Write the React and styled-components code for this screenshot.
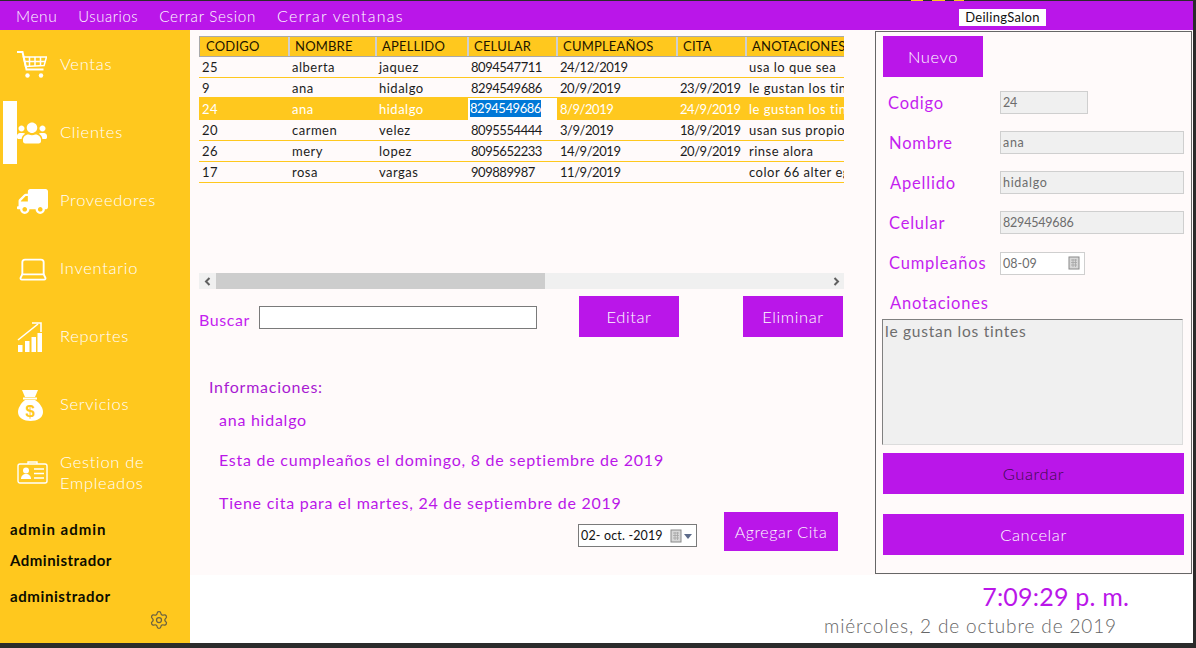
import React from 'react';
import styled, { createGlobalStyle } from 'styled-components';
import { FaUsers, FaTruck } from 'react-icons/fa';
import { Settings, Laptop } from 'lucide-react';

const purple = '#BA16E9';
const yellow = '#FFC81E';
const snow = '#FFFAFA';

const GlobalStyle = createGlobalStyle`
  html, body { margin: 0; padding: 0; background: #2b2b2b; }
  body { font-family: "Lato", "Open Sans", sans-serif; font-weight: 300; letter-spacing: 0.55px; overflow: hidden; }
  * { box-sizing: border-box; }
`;

const Screen = styled.div`
  width: 1196px;
  height: 648px;
  display: flex;
  flex-direction: column;
  background: #2b2b2b;
  overflow: hidden;
`;

const TopStrip = styled.div`
  height: 1px;
  flex: none;
  display: flex;
  padding-left: 911px;
  gap: 9px;
`;

const StripBit = styled.span`
  width: ${(p) => p.$w}px;
  background: ${yellow};
`;

const Window = styled.div`
  width: 1193px;
  height: 642px;
  flex: none;
  display: flex;
  flex-direction: column;
  background: #fff;
`;

const MenuBar = styled.div`
  height: 29px;
  flex: none;
  background: ${purple};
  display: flex;
  align-items: center;
  gap: 21px;
  padding: 0 147px 0 16px;
  color: #fff;
`;

const MenuLink = styled.span`
  font-size: ${(p) => p.$fs}px;
  letter-spacing: ${(p) => p.$ls}px;
  white-space: nowrap;
`;

const Brand = styled.div`
  margin-left: auto;
  margin-top: 3px;
  width: 87px;
  height: 17px;
  line-height: 17px;
  background: #fff;
  color: #111;
  font-size: 13px;
  font-weight: 400;
  text-align: center;
  letter-spacing: 0.3px;
`;

const Body = styled.div`
  flex: 1;
  display: flex;
  min-height: 0;
`;

const Sidebar = styled.aside`
  width: 190px;
  flex: none;
  background: ${yellow};
  padding-top: 1px;
  display: flex;
  flex-direction: column;
`;

const NavItem = styled.div`
  position: relative;
  height: 68px;
  flex: none;
  display: flex;
  align-items: center;
  padding-left: 17px;
  color: #fff;
  font-size: 16.5px;
  letter-spacing: 0.7px;
  line-height: 21px;
  ${(p) =>
    p.$active &&
    `&::before {
      content: '';
      position: absolute;
      left: 3px;
      top: 2px;
      width: 14px;
      height: 63px;
      background: #fff;
    }`}
`;

const NavIcon = styled.div`
  position: relative;
  width: 43px;
  flex: none;
  display: flex;
  color: #fff;
`;

const NavLabel = styled.span`
  padding-bottom: 1px;
`;

const UserBlock = styled.div`
  padding: 12px 0 0 10px;
  color: #0c0c00;
  font-weight: 700;
  font-size: 15px;
`;

const UserLine = styled.div`
  height: 20px;
  line-height: 20px;
  letter-spacing: ${(p) => p.$ls}px;
  margin-bottom: ${(p) => p.$gap}px;
`;

const GearRow = styled.div`
  display: flex;
  justify-content: flex-end;
  padding-right: 21px;
  margin-top: 4px;
  color: #6b6240;
`;

const Main = styled.main`
  flex: 1;
  display: flex;
  flex-direction: column;
  min-width: 0;
`;

const Content = styled.div`
  height: 545px;
  flex: none;
  display: flex;
  background: ${snow};
`;

const LeftPane = styled.section`
  width: 685px;
  flex: none;
  padding: 6px 0 0 9px;
`;

const TableArea = styled.div`
  width: 645px;
  height: 237px;
  overflow: hidden;
`;

const Row = styled.div`
  display: grid;
  grid-template-columns: 90px 87px 92px 89px 120px 69px 98px;
  width: 645px;
  height: ${(p) => p.$h}px;
  align-items: center;
  font-size: 13px;
  font-weight: 400;
  letter-spacing: 0.5px;
  color: ${(p) => (p.$selected ? '#fff' : '#1c1c1c')};
  background: ${(p) => (p.$selected ? yellow : 'transparent')};
  border-bottom: ${(p) => (p.$selected ? 'none' : `1px solid ${yellow}`)};
`;

const HeadRow = styled(Row)`
  background: ${yellow};
  border: none;
  border-top: 1px solid #a9a9a9;
  border-bottom: 1px solid #a9a9a9;
  border-left: 1px solid #a9a9a9;
  color: #1c1400;
  letter-spacing: 0.2px;
`;

const HeadCell = styled.div`
  height: 100%;
  line-height: 19px;
  padding-left: 5px;
  white-space: nowrap;
  overflow: hidden;
  border-right: 2px solid #cfcfcf;
  &:first-child { padding-left: 6px; }
  &:last-child { border-right: none; }
`;

const Cell = styled.div`
  padding-left: 3px;
  white-space: nowrap;
  overflow: hidden;
  letter-spacing: ${(p) => (p.$num ? '-0.45px' : 'inherit')};
`;

const FocusCell = styled.div`
  height: 100%;
  background: #fff;
  padding: 2px 0 0 2px;
`;

const Selection = styled.span`
  display: block;
  width: 71px;
  height: 17px;
  line-height: 17px;
  background: #0078d7;
  color: #fff;
  letter-spacing: -0.45px;
  overflow: hidden;
  white-space: nowrap;
`;

const ScrollBar = styled.div`
  width: 645px;
  height: 16px;
  display: flex;
  align-items: center;
  background: #f0f0f0;
  color: #606060;
`;

const ScrollThumb = styled.div`
  width: 329px;
  height: 16px;
  background: #cdcdcd;
`;

const ArrowBox = styled.div`
  width: ${(p) => (p.$grow ? 'auto' : '17px')};
  flex: ${(p) => (p.$grow ? 1 : 'none')};
  display: flex;
  justify-content: ${(p) => (p.$grow ? 'flex-end' : 'center')};
  padding-right: ${(p) => (p.$grow ? '4px' : 0)};
`;

const SearchRow = styled.div`
  margin-top: 7px;
  display: flex;
  width: 645px;
  height: 41px;
`;

const SearchLabel = styled.label`
  width: 60px;
  flex: none;
  padding-top: 14px;
  color: #c41ef0;
  font-size: 16px;
  font-weight: 400;
  letter-spacing: 0.6px;
`;

const SearchInput = styled.input`
  width: 278px;
  height: 23px;
  margin-top: 10px;
  flex: none;
  border: 1px solid #7a7a7a;
  background: #fff;
  outline: none;
`;

const ActionButton = styled.button`
  width: ${(p) => p.$w || 100}px;
  height: ${(p) => p.$h || 41}px;
  flex: none;
  margin-left: ${(p) => p.$ml || 0}px;
  margin-top: ${(p) => p.$mt || 0}px;
  border: none;
  padding: 0;
  background: ${purple};
  color: ${(p) => (p.$dark ? '#3a0a4a' : '#fff')};
  font-family: inherit;
  font-weight: 300;
  font-size: ${(p) => p.$fs || 16.5}px;
  letter-spacing: 0.6px;
`;

const InfoBlock = styled.div`
  padding: 39px 0 0 10px;
  color: ${purple};
  font-size: 16px;
  font-weight: 400;
  letter-spacing: 0.75px;
`;

const InfoHeading = styled.div`
  height: 22px;
  line-height: 22px;
  color: #a91ad2;
`;

const InfoLine = styled.div`
  height: 22px;
  line-height: 22px;
  padding-left: 10px;
  margin-top: ${(p) => p.$mt}px;
`;

const CitaRow = styled.div`
  display: flex;
  align-items: flex-start;
  width: 629px;
  justify-content: flex-end;
`;

const DateBox = styled.div`
  width: 119px;
  height: 23px;
  margin-top: 10px;
  border: 1px solid #7a7a7a;
  background: #fff;
  display: flex;
  align-items: center;
  justify-content: space-between;
  padding: 0 3px 0 2px;
  font-size: 12.5px;
  font-weight: 400;
  letter-spacing: 0.15px;
  color: #111;
`;

const FormPanel = styled.section`
  width: 317px;
  height: 543px;
  margin-top: 1px;
  flex: none;
  border: 1px solid #666;
  padding: 4px 7px 0;
  display: flex;
  flex-direction: column;
  align-items: flex-start;
`;

const FormRow = styled.div`
  display: flex;
  align-items: center;
  height: 40px;
  width: 100%;
  flex: none;
  margin-top: ${(p) => p.$mt || 0}px;
  margin-bottom: ${(p) => p.$mb || 0}px;
`;

const FormLabel = styled.label`
  width: 117px;
  flex: none;
  padding-left: ${(p) => p.$pl}px;
  padding-bottom: 1px;
  color: #c41ef0;
  font-size: 16.5px;
  font-weight: 400;
  letter-spacing: 0.8px;
  white-space: nowrap;
`;

const ReadInput = styled.input`
  width: ${(p) => p.$w}px;
  height: 23px;
  margin-bottom: 2px;
  border: 1px solid #cfcfcf;
  background: #f0f0f0;
  color: #6d6d6d;
  font-family: inherit;
  font-weight: 400;
  font-size: 12.5px;
  letter-spacing: ${(p) => (p.$num ? '-0.2px' : '0.7px')};
  padding: 0 2px;
  outline: none;
`;

const BirthBox = styled.div`
  width: 85px;
  height: 23px;
  border: 1px solid #cfcfcf;
  background: #fff;
  color: #6d6d6d;
  font-size: 12.5px;
  font-weight: 400;
  letter-spacing: 0;
  display: flex;
  align-items: center;
  justify-content: space-between;
  padding: 0 3px 0 2px;
`;

const NotesArea = styled.textarea`
  width: 301px;
  height: 126px;
  flex: none;
  margin-left: -1px;
  padding: 2px;
  border: 1px solid #dcdcdc;
  border-top: 1px solid #808080;
  border-left: 1px solid #808080;
  background: #f0f0f0;
  color: #6d6d6d;
  font-family: inherit;
  font-weight: 400;
  font-size: 15.5px;
  letter-spacing: 0.75px;
  resize: none;
  outline: none;
`;

const Footer = styled.footer`
  flex: 1;
  display: flex;
  flex-direction: column;
  align-items: flex-end;
  background: #fff;
`;

const Clock = styled.div`
  margin: 5px 64px 0 0;
  height: 32px;
  line-height: 32px;
  color: ${purple};
  font-size: 25px;
  font-weight: 400;
  letter-spacing: 0.2px;
`;

const DateLine = styled.div`
  margin: 2px 76px 0 0;
  height: 24px;
  line-height: 24px;
  color: #666;
  font-size: 19px;
  letter-spacing: 0.87px;
`;

const CartIcon = () => (
  <svg width="30" height="28" viewBox="0 0 30 28" fill="none" stroke="#fff" strokeWidth="1.5">
    <path d="M0 1h5.5l4 17.5h17" strokeWidth="2" />
    <path d="M6.5 6h23l-2.4 8.5L8.6 15.5z" />
    <path d="M7.5 10.5h21M12.5 6v9.5M18 6v9M23.5 6v8.7" />
    <circle cx="10.5" cy="24.5" r="2.2" fill="#fff" stroke="none" />
    <circle cx="24" cy="24.5" r="2.2" fill="#fff" stroke="none" />
  </svg>
);

const ReportIcon = () => (
  <svg width="26" height="30" viewBox="0 0 26 30" fill="#fff">
    <path d="M1 18 21 2" stroke="#fff" strokeWidth="1.6" fill="none" />
    <path d="M15 1h9v9" stroke="#fff" strokeWidth="1.6" fill="none" />
    <rect x="1" y="23" width="4.5" height="7" />
    <rect x="8" y="19" width="4.5" height="11" />
    <rect x="14.5" y="15" width="4.5" height="15" />
    <rect x="20.5" y="11" width="4.5" height="19" />
  </svg>
);

const MoneyBagIcon = () => (
  <svg width="27" height="31" viewBox="0 0 27 31">
    <path d="M5 0h16l-3 7h-10z" fill="#fff" />
    <rect x="6" y="7.500" width="14" height="2" fill="#fff" />
    <path d="M8 10h10c5 3 8 8 8 12 0 6-6 9-12.500 9S1 28 1 22c0-4 3-9 7-12z" fill="#fff" />
    <text x="13.500" y="27" textAnchor="middle" fontSize="17" fontWeight="700" fontFamily="Liberation Sans" fill={yellow}>$</text>
  </svg>
);

const IdCardIcon = () => (
  <svg width="31" height="24" viewBox="0 0 31 24" fill="none" stroke="#fff" strokeWidth="1.4">
    <rect x="1" y="3" width="29" height="19" rx="2" />
    <path d="M11 3V1h9v2" />
    <circle cx="9" cy="9.500" r="3" fill="#fff" stroke="none" />
    <path d="M4 18c0-3 2-5 5-5s5 2 5 5z" fill="#fff" stroke="none" />
    <path d="M17 8h10M17 12.500h10M17 17h10" />
  </svg>
);

const CalendarIcon = ({ arrow }) => (
  <svg width={arrow ? 23 : 13} height="14" viewBox={arrow ? '0 0 23 14' : '0 0 13 14'}>
    <rect x="1" y="1" width="10" height="12" fill="#d8d8d8" stroke="#8a8a8a" />
    <path d="M3 4h6M3 6.500h6M3 9h6M5 3v8M7.500 3v8" stroke="#a6a6a6" strokeWidth="0.8" />
    {arrow && <path d="M14 5h8l-4 5z" fill="#5d6b8a" />}
  </svg>
);

const Chevron = ({ left }) => (
  <svg width="7" height="9" viewBox="0 0 7 9" fill="none" stroke="currentColor" strokeWidth="2">
    <path d={left ? 'M5.500 1 2 4.500 5.500 8' : 'M1.500 1 5 4.500 1.500 8'} />
  </svg>
);

const navItems = [
  { label: 'Ventas', icon: <CartIcon /> },
  { label: 'Clientes', icon: <FaUsers size={30} />, active: true },
  { label: 'Proveedores', icon: <FaTruck size={31} style={{ transform: 'scaleX(-1)' }} /> },
  { label: 'Inventario', icon: <Laptop size={32} strokeWidth={1.4} /> },
  { label: 'Reportes', icon: <ReportIcon /> },
  { label: 'Servicios', icon: <MoneyBagIcon /> },
  { label: <>Gestion de<br />Empleados</>, icon: <IdCardIcon /> },
];

const headers = ['CODIGO', 'NOMBRE', 'APELLIDO', 'CELULAR', 'CUMPLEAÑOS', 'CITA', 'ANOTACIONES'];

const clients = [
  ['25', 'alberta', 'jaquez', '8094547711', '24/12/2019', '', 'usa lo que sea'],
  ['9', 'ana', 'hidalgo', '8294549686', '20/9/2019', '23/9/2019', 'le gustan los tintes'],
  ['24', 'ana', 'hidalgo', '8294549686', '8/9/2019', '24/9/2019', 'le gustan los tintes'],
  ['20', 'carmen', 'velez', '8095554444', '3/9/2019', '18/9/2019', 'usan sus propios'],
  ['26', 'mery', 'lopez', '8095652233', '14/9/2019', '20/9/2019', 'rinse alora'],
  ['17', 'rosa', 'vargas', '909889987', '11/9/2019', '', 'color 66 alter ego'],
];

const rowHeights = [21, 20, 22, 21, 21, 21];

const fields = [
  { label: 'Codigo', pl: 5, value: '24', w: 88, num: true },
  { label: 'Nombre', pl: 6, value: 'ana', w: 184 },
  { label: 'Apellido', pl: 7, value: 'hidalgo', w: 184 },
  { label: 'Celular', pl: 6, value: '8294549686', w: 184, num: true },
];

export default function App() {
  return (
    <Screen>
      <GlobalStyle />
      <TopStrip>
        <StripBit $w={12} />
        <StripBit $w={13} />
        <StripBit $w={10} />
      </TopStrip>
      <Window>
        <MenuBar>
          <MenuLink $fs={15.5} $ls={0.6}>Menu</MenuLink>
          <MenuLink $fs={14.8} $ls={0.6}>Usuarios</MenuLink>
          <MenuLink $fs={15.2} $ls={0.7}>Cerrar Sesion</MenuLink>
          <MenuLink $fs={16} $ls={1.2}>Cerrar ventanas</MenuLink>
          <Brand>DeilingSalon</Brand>
        </MenuBar>
        <Body>
          <Sidebar>
            {navItems.map((item, i) => (
              <NavItem key={i} $active={item.active}>
                <NavIcon>{item.icon}</NavIcon>
                <NavLabel>{item.label}</NavLabel>
              </NavItem>
            ))}
            <UserBlock>
              <UserLine $gap={11} $ls={1}>admin admin</UserLine>
              <UserLine $gap={16} $ls={0.5}>Administrador</UserLine>
              <UserLine $gap={0} $ls={0.6}>administrador</UserLine>
            </UserBlock>
            <GearRow>
              <Settings size={20} strokeWidth={1.5} />
            </GearRow>
          </Sidebar>
          <Main>
            <Content>
              <LeftPane>
                <TableArea>
                  <HeadRow $h={21}>
                    {headers.map((h) => (
                      <HeadCell key={h}>{h}</HeadCell>
                    ))}
                  </HeadRow>
                  {clients.map((row, r) => (
                    <Row key={r} $h={rowHeights[r]} $selected={r === 2}>
                      {row.map((value, c) =>
                        r === 2 && c === 3 ? (
                          <FocusCell key={c}>
                            <Selection>{value}</Selection>
                          </FocusCell>
                        ) : (
                          <Cell key={c} $num={c >= 3 && c <= 5}>{value}</Cell>
                        )
                      )}
                    </Row>
                  ))}
                </TableArea>
                <ScrollBar>
                  <ArrowBox><Chevron left /></ArrowBox>
                  <ScrollThumb />
                  <ArrowBox $grow><Chevron /></ArrowBox>
                </ScrollBar>
                <SearchRow>
                  <SearchLabel>Buscar</SearchLabel>
                  <SearchInput />
                  <ActionButton $ml={42}>Editar</ActionButton>
                  <ActionButton $ml={64}>Eliminar</ActionButton>
                </SearchRow>
                <InfoBlock>
                  <InfoHeading>Informaciones:</InfoHeading>
                  <InfoLine $mt={11}>ana hidalgo</InfoLine>
                  <InfoLine $mt={18}>Esta de cumpleaños el domingo, 8 de septiembre de 2019</InfoLine>
                  <InfoLine $mt={21}>Tiene cita para el martes, 24 de septiembre de 2019</InfoLine>
                  <CitaRow>
                    <DateBox>
                      <span>02- oct. -2019</span>
                      <CalendarIcon arrow />
                    </DateBox>
                    <ActionButton $w={114} $h={39} $ml={27} $mt={-2} $fs={16}>Agregar Cita</ActionButton>
                  </CitaRow>
                </InfoBlock>
              </LeftPane>
              <FormPanel>
                <ActionButton>Nuevo</ActionButton>
                {fields.map((f, i) => (
                  <FormRow key={f.label} $mt={i === 0 ? 6 : 0}>
                    <FormLabel $pl={f.pl}>{f.label}</FormLabel>
                    <ReadInput $w={f.w} $num={f.num} value={f.value} readOnly />
                  </FormRow>
                ))}
                <FormRow>
                  <FormLabel $pl={6}>Cumpleaños</FormLabel>
                  <BirthBox>
                    <span>08-09</span>
                    <CalendarIcon />
                  </BirthBox>
                </FormRow>
                <FormRow $mb={-4}>
                  <FormLabel $pl={7}>Anotaciones</FormLabel>
                </FormRow>
                <NotesArea value="le gustan los tintes" readOnly />
                <ActionButton $w={301} $mt={8} $dark>Guardar</ActionButton>
                <ActionButton $w={301} $mt={20}>Cancelar</ActionButton>
              </FormPanel>
            </Content>
            <Footer>
              <Clock>7:09:29 p. m.</Clock>
              <DateLine>miércoles, 2 de octubre de 2019</DateLine>
            </Footer>
          </Main>
        </Body>
      </Window>
    </Screen>
  );
}
